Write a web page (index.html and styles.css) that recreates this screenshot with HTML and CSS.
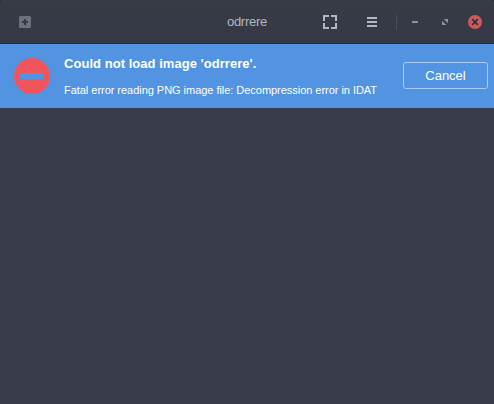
FILE: index.html
```html
<!DOCTYPE html>
<html lang="en">
<head>
<meta charset="utf-8">
<title>odrrere</title>
<link rel="stylesheet" href="styles.css">
</head>
<body>
<div class="window">
  <header class="bar">
    <div class="side left">
      <svg class="icon" width="12" height="12" viewBox="0 0 12 12"><path fill="#6b717e" fill-rule="evenodd" d="M1 0H11L12 1V11L11 12H1L0 11V1ZM5 3V5H3V7H5V9H7V7H9V5H7V3Z"/></svg>
    </div>
    <h1 class="title">odrrere</h1>
    <div class="side right">
      <svg class="icon full" width="14" height="14" viewBox="0 0 14 14"><path fill="none" stroke="#afb8c6" stroke-width="2" d="M1 6V1H6M8 1H13V6M13 8V13H8M6 13H1V8"/></svg>
      <svg class="icon menu" width="10" height="10" viewBox="0 0 10 10"><path fill="#afb8c6" d="M0 0H10V2H0ZM0 4H10V6H0ZM0 8H10V10H0Z"/></svg>
      <span class="separator"></span>
      <svg class="icon min" width="6" height="2" viewBox="0 0 6 2"><path fill="#90939b" d="M0 0H6V2H0Z"/></svg>
      <svg class="icon max" width="6" height="6" viewBox="0 0 6 6"><path fill="#90939b" d="M1.7 0H6V4.3ZM0 1.7L4.3 6H0Z"/></svg>
      <svg class="icon" width="14" height="14" viewBox="0 0 14 14"><circle cx="7" cy="7" r="7" fill="#cc575d"/><path stroke="#2f343f" stroke-width="1.7" d="M4.2 4.2L9.8 9.8M9.8 4.2L4.2 9.8"/></svg>
    </div>
  </header>
  <section class="infobar">
    <svg class="icon" width="36" height="36" viewBox="0 0 36 36"><path fill="#f0555c" fill-rule="evenodd" d="M18 0a18 18 0 0 1 0 36a18 18 0 0 1 0-36ZM6 15V21H30V15Z"/></svg>
    <div class="message">
      <p class="primary">Could not load image 'odrrere'.</p>
      <p class="secondary">Fatal error reading PNG image file: Decompression error in IDAT</p>
    </div>
    <button class="cancel">Cancel</button>
  </section>
  <main class="canvas"></main>
</div>
</body>
</html>
```
FILE: styles.css
```css
* { box-sizing: border-box; }
body {
  margin: 0;
  background: #22262e;
  font-family: "Liberation Sans", Arial, sans-serif;
}
.window {
  display: flex;
  flex-direction: column;
  height: 404px;
  overflow: hidden;
  border-radius: 3px 3px 0 0;
  background: #383c4a;
}
.bar {
  display: grid;
  grid-template-columns: 1fr auto 1fr;
  align-items: center;
  height: 44px;
  background: linear-gradient(#383b45, #353945);
  border-bottom: 1px solid #2b2e39;
}
.side { display: flex; align-items: center; height: 44px; }
.left { padding-left: 19px; }
.right { justify-content: flex-end; padding-right: 12px; }
.icon { display: block; flex: none; }
.title {
  margin: 0;
  font-size: 13px;
  line-height: 16px;
  font-weight: normal;
  letter-spacing: -0.25px;
  color: #afb8c6;
}
.full { margin-right: 30px; }
.menu { margin-right: 19px; }
.separator { width: 1px; height: 15px; background: #4b505d; margin-right: 15px; }
.min { margin-right: 24px; }
.max { margin-right: 20px; }
.infobar {
  display: flex;
  align-items: center;
  height: 64px;
  padding: 0 6px 0 14px;
  background: #5294e2;
  color: #fff;
}
.message { flex: 1; margin-left: 14px; white-space: nowrap; }
.message p { margin: 0; }
.primary { font-size: 13px; line-height: 16px; font-weight: bold; letter-spacing: 0.04px; }
.message .secondary { margin-top: 12px; font-size: 11px; line-height: 13px; letter-spacing: -0.035px; }
.cancel {
  width: 85px;
  height: 27px;
  margin-bottom: 1px;
  padding: 0;
  border: 1px solid #a9caf1;
  border-radius: 3px;
  background: transparent;
  color: #fff;
  font: 13px "Liberation Sans", Arial, sans-serif;
}
.canvas { flex: 1; }
```
